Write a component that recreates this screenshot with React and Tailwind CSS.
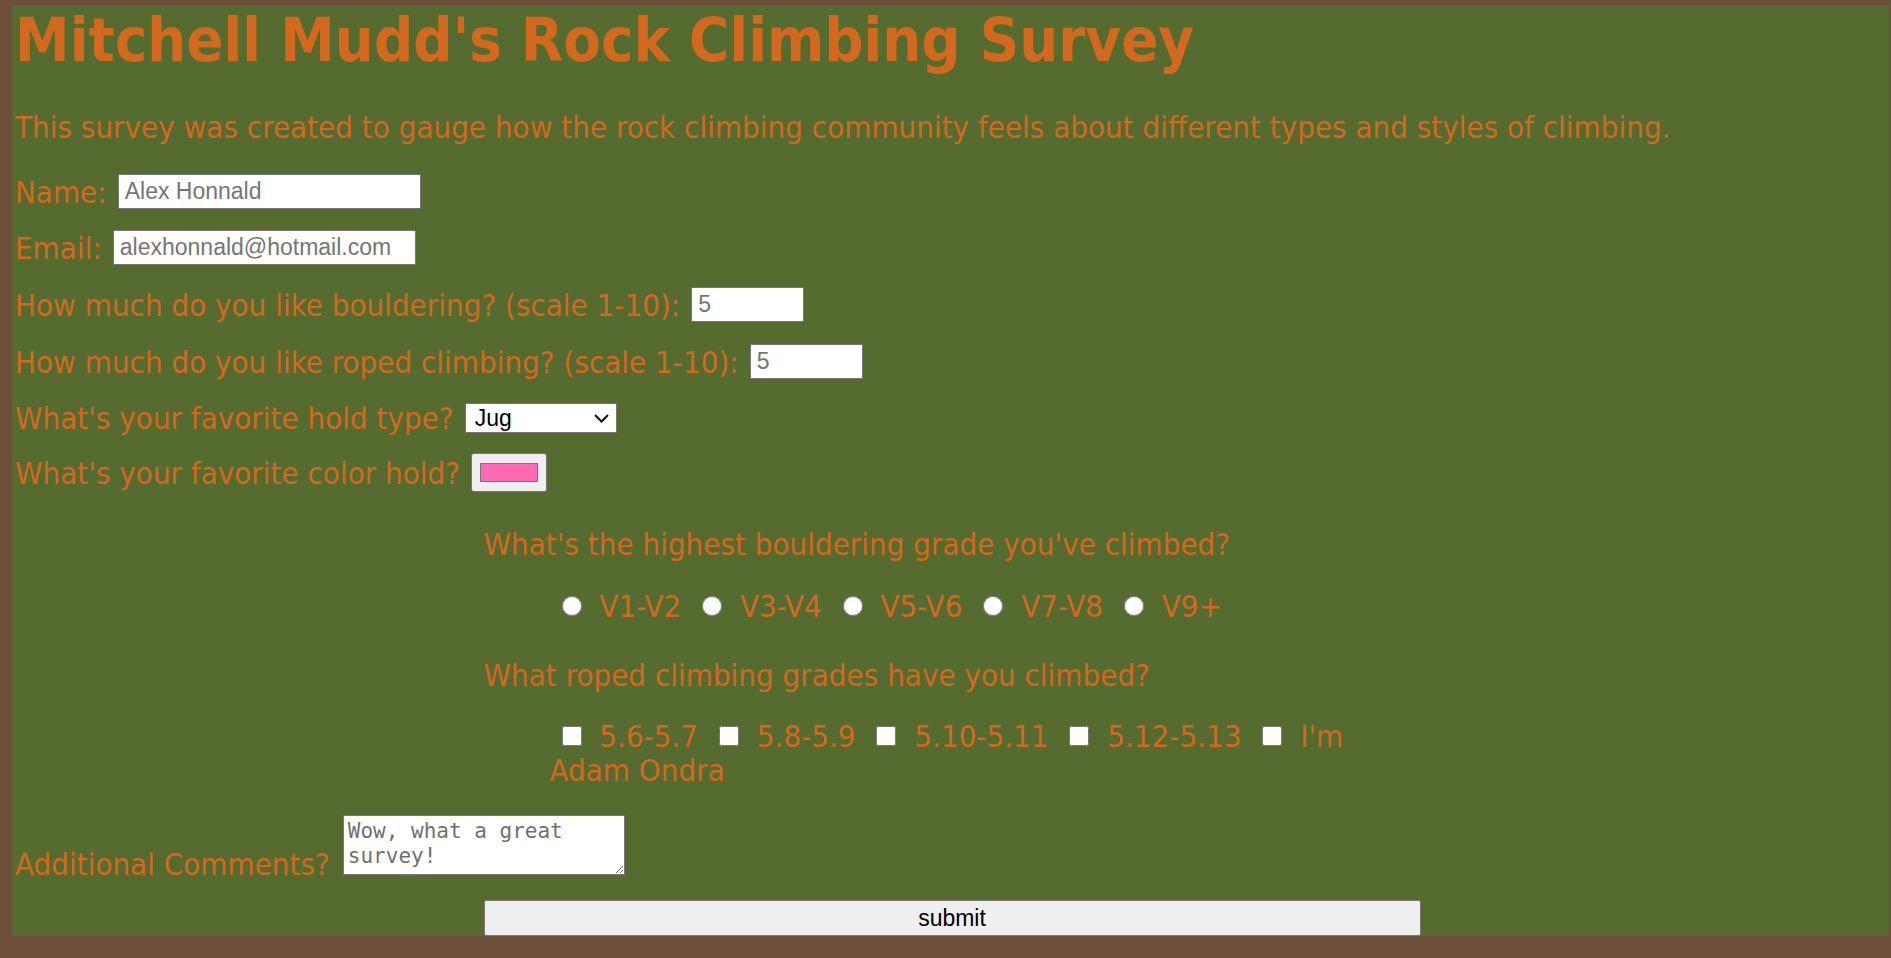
import React from 'react';

const field =
  "bg-white border border-[#767676] text-black px-[6px] font-['Liberation_Sans',Arial,sans-serif] text-[23px] placeholder:text-[#757575]";

function Row({ label, children, className = '' }) {
  return (
    <div className={`flex items-center ${className}`}>
      <span className="whitespace-nowrap">{label}</span>
      {children}
    </div>
  );
}

export default function App() {
  const bouldering = ['V1-V2', 'V3-V4', 'V5-V6', 'V7-V8', 'V9+'];
  const roped = ['5.6-5.7', '5.8-5.9', '5.10-5.11', '5.12-5.13', "I'm Adam Ondra"];

  return (
    <div className="min-h-screen bg-[#6e4f39] pt-[5px] pl-[12px] pr-[2px]">
      <form className="bg-[#556b2f] text-[#d2691e] pl-[3px] font-['DejaVu_Sans_Condensed','DejaVu_Sans',sans-serif] text-[31px] leading-[34px]">
        <h1 className="text-[61px] leading-[68px] font-bold pt-[1px]">Mitchell Mudd's Rock Climbing Survey</h1>
        <p className="mt-[36px]">
          This survey was created to gauge how the rock climbing community feels about different types and styles of climbing.
        </p>

        <Row label="Name:" className="mt-[30px] h-[35px]">
          <input type="text" placeholder="Alex Honnald" className={`${field} ml-[11px] w-[303px] h-[35px]`} />
        </Row>
        <Row label="Email:" className="mt-[21px] h-[35px]">
          <input type="email" placeholder="alexhonnald@hotmail.com" className={`${field} ml-[11px] w-[303px] h-[35px]`} />
        </Row>
        <Row label="How much do you like bouldering? (scale 1-10):" className="mt-[22px] h-[35px]">
          <input type="number" placeholder="5" className={`${field} ml-[11px] w-[113px] h-[35px]`} />
        </Row>
        <Row label="How much do you like roped climbing? (scale 1-10):" className="mt-[22px] h-[35px]">
          <input type="number" placeholder="5" className={`${field} ml-[11px] w-[113px] h-[35px]`} />
        </Row>
        <Row label="What's your favorite hold type?" className="mt-[21px] h-[35px]">
          <div className="relative ml-[11px]">
            <select
              defaultValue="Jug"
              className={`${field} appearance-none w-[152px] h-[30px] leading-[28px] py-0 pl-[9px] pr-[28px] rounded-none block`}
            >
              <option>Jug</option>
              <option>Crimp</option>
              <option>Sloper</option>
              <option>Pinch</option>
              <option>Pocket</option>
            </select>
            <svg
              className="absolute right-[8px] top-[11px] pointer-events-none"
              width="15"
              height="9"
              viewBox="0 0 15 9"
              fill="none"
              stroke="#111"
              strokeWidth="2"
            >
              <path d="M1 1l6.5 6.5L14 1" />
            </svg>
          </div>
        </Row>
        <Row label="What's your favorite color hold?" className="mt-[18px] h-[39px]">
          <input
            type="color"
            defaultValue="#ff69b4"
            className="ml-[11px] w-[76px] h-[39px] bg-[#efefef] border border-[#767676] rounded-[3px] px-[8px] py-[9px] cursor-pointer [&::-webkit-color-swatch-wrapper]:p-0 [&::-webkit-color-swatch]:border-[#767676]"
          />
        </Row>

        <div className="w-1/2 mx-auto">
          <p className="mt-[35px]">What's the highest bouldering grade you've climbed?</p>
          <div className="mt-[28px] pl-[66px] pr-[10px]">
            {bouldering.map((g) => (
              <React.Fragment key={g}>
                <input type="radio" name="boulder" id={g} className="w-[20px] h-[20px] ml-[12px] mr-[9px] align-[1px]" />{' '}
                <label htmlFor={g}>{g}</label>{' '}
              </React.Fragment>
            ))}
          </div>
          <p className="mt-[35px]">What roped climbing grades have you climbed?</p>
          <div className="mt-[27px] pl-[66px] pr-[10px]">
            {roped.map((g) => (
              <React.Fragment key={g}>
                <input type="checkbox" id={g} className="w-[20px] h-[20px] ml-[12px] mr-[9px] align-[1px]" />{' '}
                <label htmlFor={g}>{g}</label>{' '}
              </React.Fragment>
            ))}
          </div>
        </div>

        <div className="flex items-end mt-[28px]">
          <span className="whitespace-nowrap mb-[-6px]">Additional Comments?</span>
          <textarea
            placeholder="Wow, what a great survey!"
            className="ml-[13px] w-[282px] h-[60px] bg-white border border-[#767676] px-[4px] py-[3px] text-black font-['DejaVu_Sans_Mono','Liberation_Mono',monospace] text-[21px] leading-[25px] placeholder:text-[#6f6f6f]"
          />
        </div>

        <div className="w-1/2 mx-auto mt-[25px]">
          <button
            type="submit"
            className="block w-full h-[36px] bg-[#efefef] border border-[#767676] rounded-[2px] text-black font-['Liberation_Sans',Arial,sans-serif] text-[23px]"
          >
            submit
          </button>
        </div>
      </form>
    </div>
  );
}
